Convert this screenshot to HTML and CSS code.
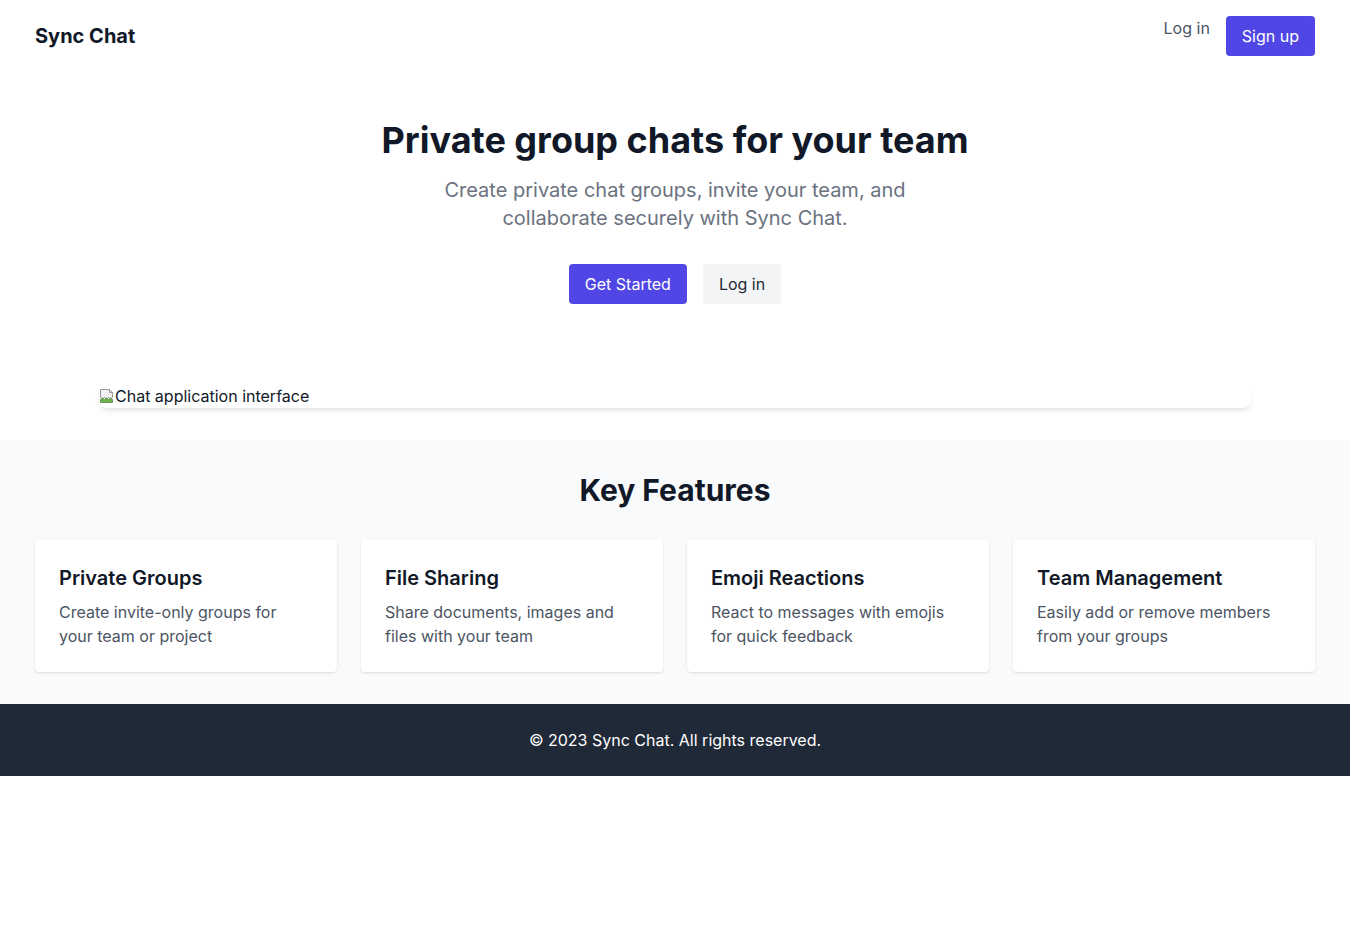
FILE: index.html
```html
<!DOCTYPE html>
<html lang="en">
<head>
<meta charset="utf-8">
<title>Sync Chat</title>
<link rel="stylesheet" href="styles.css">
</head>
<body>
<header class="header">
  <div class="container header-inner">
    <div class="logo">Sync Chat</div>
    <nav class="nav">
      <a class="nav-link" href="#">Log in</a>
      <a class="btn btn-primary" href="#">Sign up</a>
    </nav>
  </div>
</header>
<section class="hero">
  <h1 class="hero-title">Private group chats for your team</h1>
  <p class="hero-sub">Create private chat groups, invite your team, and collaborate securely with Sync Chat.</p>
  <div class="hero-actions">
    <a class="btn btn-primary" href="#">Get Started</a>
    <a class="btn btn-secondary" href="#">Log in</a>
  </div>
  <div class="preview">
    <svg class="broken-icon" width="16" height="16" viewBox="0 0 16 16">
      <path d="M1.5 1.5h9l3 3v5l-2 1.5-2-1.5-2 1.5-2-1.5-2 1.5-2-1.5z" fill="#f1f1f1" stroke="#9a9a9a" stroke-width="1"/>
      <path d="M1.5 11.5l2-1.5 2 1.5 2-1.5 2 1.5 2-1.5 2 1.5v3h-12z" fill="#6bb34a" stroke="#6a8f5a" stroke-width="1"/>
      <path d="M10.5 1.5v3h3" fill="none" stroke="#9a9a9a" stroke-width="1"/>
    </svg>
    <span class="broken-text">Chat application interface</span>
  </div>
</section>
<section class="features">
  <h2 class="features-title">Key Features</h2>
  <div class="container grid">
    <div class="card">
      <h3 class="card-title">Private Groups</h3>
      <p class="card-text">Create invite-only groups for your team or project</p>
    </div>
    <div class="card">
      <h3 class="card-title">File Sharing</h3>
      <p class="card-text">Share documents, images and files with your team</p>
    </div>
    <div class="card">
      <h3 class="card-title">Emoji Reactions</h3>
      <p class="card-text">React to messages with emojis for quick feedback</p>
    </div>
    <div class="card">
      <h3 class="card-title">Team Management</h3>
      <p class="card-text">Easily add or remove members from your groups</p>
    </div>
  </div>
</section>
<footer class="footer">
  <p>© 2023 Sync Chat. All rights reserved.</p>
</footer>
</body>
</html>
```
FILE: styles.css
```css
* { box-sizing: border-box; }
html, body { margin: 0; padding: 0; }
body {
  font-family: Inter, "Noto Sans", sans-serif;
  font-size: 16px;
  line-height: 24px;
  color: #111827;
  background: #fff;
}
a { text-decoration: none; }
h1, h2, h3, p { margin: 0; }

.container {
  max-width: 1280px;
  margin: 0 auto;
}

.header { padding: 16px 0; }
.header-inner {
  display: flex;
  justify-content: space-between;
  align-items: center;
}
.logo {
  font-size: 20px;
  line-height: 28px;
  font-weight: 700;
  color: #111827;
}
.nav {
  display: flex;
  gap: 16px;
}
.nav-link {
  color: #4b5563;
}

.btn {
  display: inline-block;
  padding: 8px 16px;
  border-radius: 4px;
  font-size: 16px;
  line-height: 24px;
}
.btn-primary {
  background: #4f46e5;
  color: #fff;
}
.btn-secondary {
  background: #f3f4f6;
  color: #1f2937;
}

.hero {
  padding: 48px 0 32px;
  text-align: center;
}
.hero-title {
  font-size: 36px;
  line-height: 40px;
  font-weight: 700;
  color: #111827;
}
.hero-sub {
  max-width: 512px;
  margin: 16px auto 0;
  font-size: 20px;
  line-height: 28px;
  color: #6b7280;
}
.hero-actions {
  margin-top: 32px;
  display: flex;
  justify-content: center;
  gap: 16px;
}
.preview {
  max-width: 1152px;
  height: 24px;
  margin: 80px auto 0;
  display: flex;
  align-items: center;
  border-radius: 8px;
  box-shadow: 0 4px 6px -1px rgba(0,0,0,0.08), 0 2px 4px -2px rgba(0,0,0,0.08);
}
.broken-icon { flex: none; }
.broken-text {
  line-height: 24px;
  color: #111827;
}

.features {
  background: #f9fafb;
  padding: 32px 0;
}
.features-title {
  text-align: center;
  font-size: 30px;
  line-height: 36px;
  font-weight: 700;
  color: #111827;
}
.grid {
  margin-top: 32px;
  display: grid;
  grid-template-columns: repeat(4, 1fr);
  gap: 24px;
}
.card {
  background: #fff;
  padding: 24px;
  border-radius: 4px;
  box-shadow: 0 1px 3px 0 rgba(0,0,0,0.1), 0 1px 2px -1px rgba(0,0,0,0.1);
}
.card-title {
  font-size: 20px;
  line-height: 28px;
  font-weight: 600;
  color: #111827;
  margin-bottom: 8px;
}
.card-text {
  color: #4b5563;
}

.footer {
  background: #1f2937;
  color: #fff;
  text-align: center;
  padding: 24px 0;
}
```
